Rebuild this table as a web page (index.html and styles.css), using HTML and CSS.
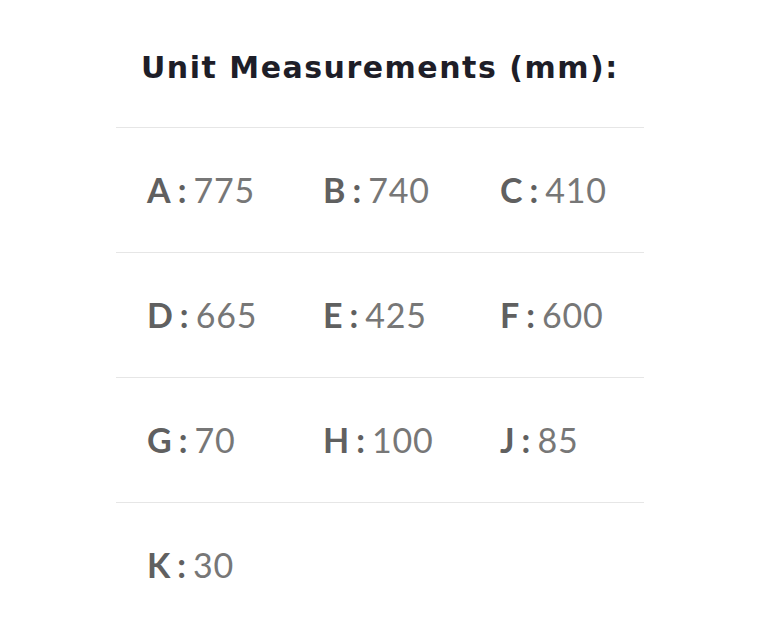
FILE: index.html
```html
<!DOCTYPE html>
<html>
<head>
<meta charset="utf-8">
<link rel="stylesheet" href="styles.css">
</head>
<body>
<div class="panel">
  <h2 class="title">Unit Measurements (mm):</h2>
  <div class="rows">
    <div class="row">
      <div class="cell"><b>A</b><span class="colon">:</span>775</div>
      <div class="cell"><b>B</b><span class="colon">:</span>740</div>
      <div class="cell"><b>C</b><span class="colon">:</span>410</div>
    </div>
    <div class="row">
      <div class="cell"><b>D</b><span class="colon">:</span>665</div>
      <div class="cell"><b>E</b><span class="colon">:</span>425</div>
      <div class="cell"><b>F</b><span class="colon">:</span>600</div>
    </div>
    <div class="row">
      <div class="cell"><b>G</b><span class="colon">:</span>70</div>
      <div class="cell"><b>H</b><span class="colon">:</span>100</div>
      <div class="cell"><b>J</b><span class="colon">:</span>85</div>
    </div>
    <div class="row">
      <div class="cell"><b>K</b><span class="colon">:</span>30</div>
    </div>
  </div>
</div>
</body>
</html>
```
FILE: styles.css
```css
html, body {
  margin: 0;
  padding: 0;
  background: #ffffff;
}
.panel {
  width: 528px;
  margin-left: 116px;
  padding-top: 44px;
}
.title {
  margin: 0 0 0 25px;
  font-family: "DejaVu Sans", sans-serif;
  font-weight: 700;
  font-size: 30px;
  line-height: 48px;
  color: #1e1e28;
  letter-spacing: 1.5px;
}
.rows {
  margin-top: 35px;
}
.row {
  display: grid;
  grid-template-columns: 176px 177px 175px;
  height: 124px;
  border-top: 1px solid #e6e6e6;
  align-items: center;
}
.cell {
  padding-left: 31px;
  font-family: Lato, sans-serif;
  font-size: 34px;
  color: #777777;
  line-height: 40px;
  letter-spacing: 0.8px;
}
.cell b {
  font-weight: 700;
  color: #606060;
  letter-spacing: 0;
}
.colon {
  font-weight: 700;
  color: #606060;
  margin: 0 7px 0 7px;
  letter-spacing: 0;
}
```
